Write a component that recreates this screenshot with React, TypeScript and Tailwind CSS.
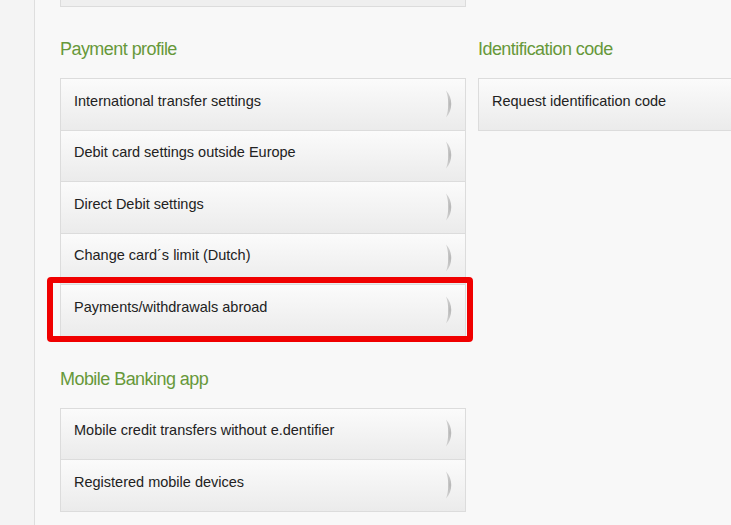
import React from "react";

const Chevron = () => (
  <svg width="10" height="28" viewBox="0 0 10 28" className="shrink-0">
    <defs>
      <linearGradient id="chev" x1="0" y1="0" x2="0" y2="1">
        <stop offset="0" stopColor="#d4d4d4" />
        <stop offset="0.5" stopColor="#b8b8b8" />
        <stop offset="1" stopColor="#d4d4d4" />
      </linearGradient>
    </defs>
    <path d="M2 0.5 C9 7.5 9 20.5 2 27.5 C5 20.5 5 7.5 2 0.5Z" fill="url(#chev)" />
  </svg>
);

const Row = ({ label, chevron = true }: { label: string; chevron?: boolean }) => (
  <div className="flex h-[51.5px] items-center justify-between border-b border-[#dcdcdc] bg-gradient-to-b from-[#fbfbfb] to-[#ebebeb] pl-[13px] pr-[11px]">
    <span className="pb-[5px] text-[14.5px] text-[#222]">{label}</span>
    {chevron && (
      <span className="pb-[1px]">
        <Chevron />
      </span>
    )}
  </div>
);

const Heading = ({ children, className = "" }: { children: React.ReactNode; className?: string }) => (
  <h2 className={`h-[24px] text-[18px] leading-[24px] tracking-[-0.55px] text-[#67983a] ${className}`}>{children}</h2>
);

export default function App() {
  return (
    <div
      className="flex h-[525px] w-[731px] overflow-hidden bg-[#f8f8f8]"
      style={{ fontFamily: '"Liberation Sans", Arial, sans-serif' }}
    >
      <div className="w-[35px] shrink-0 border-r border-[#dedede] bg-[#f4f4f4]" />
      <div className="flex shrink-0 gap-[12px] pl-[25px]">
        <div className="relative w-[406px] shrink-0">
          <div className="h-[7px] border border-t-0 border-[#dcdcdc] bg-[#efefef]" />
          <Heading className="mt-[30px]">Payment profile</Heading>
          <div className="mt-[17px] border border-b-0 border-[#dcdcdc]">
            <Row label="International transfer settings" />
            <Row label="Debit card settings outside Europe" />
            <Row label="Direct Debit settings" />
            <Row label="Change card´s limit (Dutch)" />
            <Row label="Payments/withdrawals abroad" />
          </div>
          <Heading className="mt-[30px]">Mobile Banking app</Heading>
          <div className="mt-[17px] border border-b-0 border-[#dcdcdc]">
            <Row label="Mobile credit transfers without e.dentifier" />
            <Row label="Registered mobile devices" />
          </div>
          <div className="absolute left-[-13px] top-[277px] h-[65px] w-[426px] rounded-[4px] border-[6px] border-[#f00000]" />
        </div>
        <div className="w-[406px] shrink-0">
          <div className="h-[7px]" />
          <Heading className="mt-[30px]">Identification code</Heading>
          <div className="mt-[17px] border border-b-0 border-[#dcdcdc]">
            <Row label="Request identification code" chevron={false} />
          </div>
        </div>
      </div>
    </div>
  );
}
